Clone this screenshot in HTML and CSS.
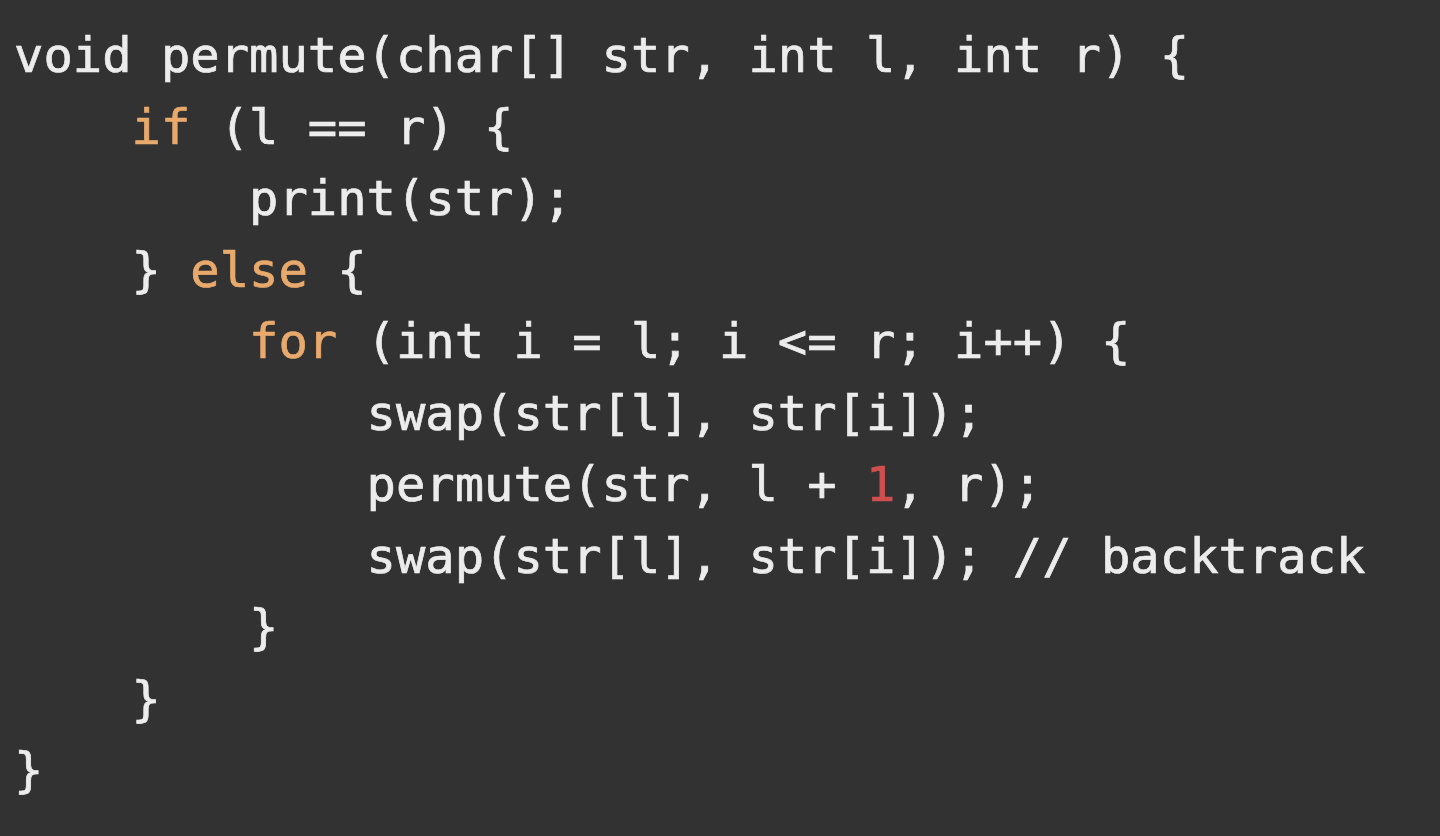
FILE: index.html
```html
<!DOCTYPE html>
<html lang="en">
<head>
<meta charset="utf-8">
<title>permute</title>
<link rel="stylesheet" href="styles.css">
</head>
<body>
<pre class="code"><code>void permute(char[] str, int l, int r) {
    <span class="kw">if</span> (l == r) {
        print(str);
    } <span class="kw">else</span> {
        <span class="kw">for</span> (int i = l; i &lt;= r; i++) {
            swap(str[l], str[i]);
            permute(str, l + <span class="num">1</span>, r);
            swap(str[l], str[i]); // backtrack
        }
    }
}</code></pre>
</body>
</html>
```
FILE: styles.css
```css
html, body {
  margin: 0;
  padding: 0;
  background: #323232;
  height: 100%;
  overflow: hidden;
}
.code {
  margin: 0;
  padding: 20px 0 0 14px;
  font-family: "DejaVu Sans Mono", "Liberation Mono", monospace;
  font-size: 48.8px;
  line-height: 71.5px;
  color: #ececec;
  white-space: pre;
  -webkit-text-stroke: 0.7px currentColor;
}
.kw {
  color: #e8a96c;
}
.num {
  color: #cf4f4f;
}
```
